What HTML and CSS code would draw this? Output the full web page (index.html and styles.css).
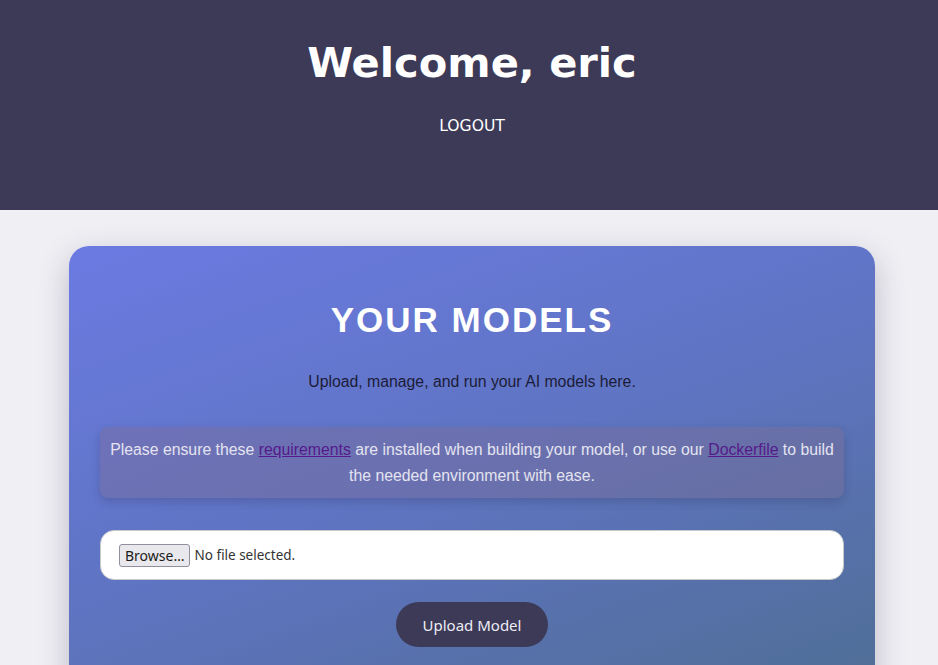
FILE: index.html
```html
<!DOCTYPE html>
<html lang="en">
<head>
<meta charset="utf-8">
<title>Your Models</title>
<link rel="stylesheet" href="styles.css">
</head>
<body>
<header class="top">
  <h1 class="welcome">Welcome, eric</h1>
  <a class="logout" href="#">LOGOUT</a>
</header>
<main class="main">
  <section class="card">
    <h2 class="card-title">YOUR MODELS</h2>
    <p class="lead">Upload, manage, and run your AI models here.</p>
    <div class="notice">
      Please ensure these <a class="link" href="#">requirements</a> are installed when building your model, or use our <a class="link" href="#">Dockerfile</a> to build the needed environment with ease.
    </div>
    <form class="upload-form">
      <label class="file-box">
        <input class="file-input" type="file">
        <span class="browse">Browse…</span>
        <span class="file-status">No file selected.</span>
      </label>
      <button class="upload-btn" type="button">Upload Model</button>
    </form>
  </section>
</main>
</body>
</html>
```

FILE: styles.css
```css
html, body {
  margin: 0;
  padding: 0;
}

body {
  background: #f0eff4;
  font-family: "Liberation Sans", Arial, sans-serif;
  overflow: hidden;
}

.top {
  background: #3c3a57;
  height: 210px;
  box-sizing: border-box;
  padding-top: 38px;
  padding-left: 6px;
  display: flex;
  flex-direction: column;
  align-items: center;
}

.welcome {
  margin: 0;
  font-family: "DejaVu Sans", sans-serif;
  font-weight: bold;
  font-size: 41.6px;
  line-height: 49px;
  color: #ffffff;
}

.logout {
  margin-top: 30px;
  font-family: "DejaVu Sans", sans-serif;
  font-size: 15.6px;
  color: #ffffff;
  text-decoration: none;
}

.main {
  display: flex;
  justify-content: center;
  padding-top: 36px;
  padding-left: 6px;
}

.card {
  width: 806px;
  box-sizing: border-box;
  padding: 54px 31px 40px;
  border-radius: 20px;
  background: linear-gradient(160deg, #6b7ae2 0%, #5f74c2 45%, #4b6d8c 100%);
  box-shadow: 0 10px 30px rgba(40, 40, 70, 0.25);
  text-align: center;
  min-height: 520px;
}

.card-title {
  margin: 0;
  font-size: 35px;
  line-height: 40px;
  letter-spacing: 2px;
  font-weight: bold;
  color: #ffffff;
}

.lead {
  margin: 33px 0 0;
  font-size: 15.8px;
  line-height: 18px;
  color: #1c1c38;
}

.notice {
  margin-top: 36px;
  padding: 10px 4px;
  border-radius: 8px;
  background: rgba(130, 105, 140, 0.35);
  box-shadow: 0 4px 10px rgba(30, 30, 60, 0.2);
  color: #e4e4f0;
  font-size: 15.8px;
  line-height: 25.6px;
}

.link {
  color: #551a8b;
  text-decoration: underline;
}

.upload-form {
  margin-top: 32px;
  display: flex;
  flex-direction: column;
  align-items: center;
}

.file-box {
  align-self: stretch;
  height: 50px;
  box-sizing: border-box;
  padding: 0 18px;
  display: flex;
  align-items: center;
  gap: 4px;
  background: #ffffff;
  border: 1px solid #c8c8cc;
  border-radius: 14px;
  font-family: "Noto Sans", "Open Sans", sans-serif;
  font-size: 13.5px;
  color: #333333;
}

.file-input {
  display: none;
}

.browse {
  display: inline-flex;
  align-items: center;
  height: 23px;
  box-sizing: border-box;
  padding: 0 5px;
  background: #e9e9ed;
  border: 1px solid #8f8f9d;
  border-radius: 3px;
  color: #1b1b1b;
  font-size: 14px;
}

.file-status {
  color: #333333;
}

.upload-btn {
  margin-top: 22px;
  height: 45px;
  padding: 0 27px;
  border: none;
  border-radius: 23px;
  background: #3c3a57;
  color: #ececf4;
  font-family: "Noto Sans", "Open Sans", sans-serif;
  font-size: 15px;
  cursor: pointer;
}
```
